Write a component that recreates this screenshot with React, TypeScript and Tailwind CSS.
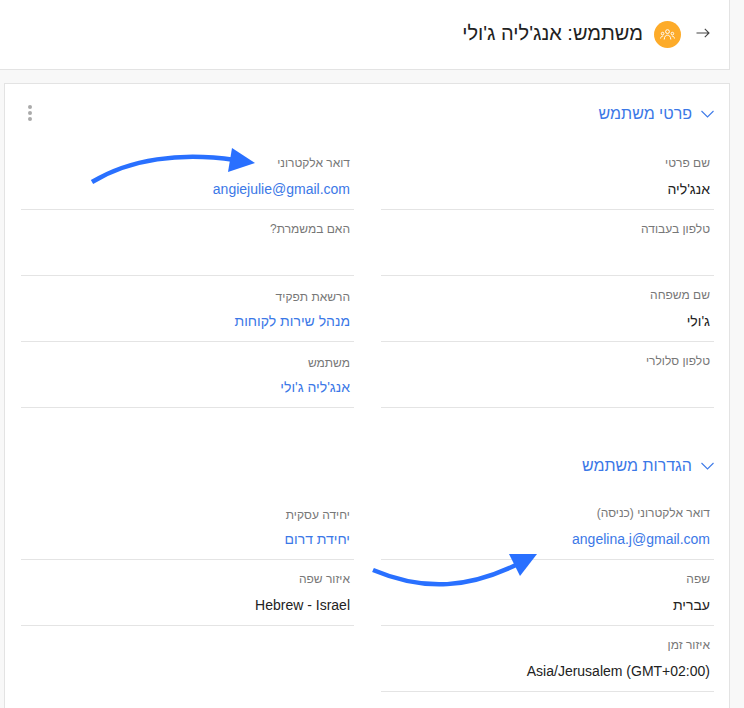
const font = "font-['Liberation_Sans',Arial,sans-serif]";

type Field = { label: string; value?: string; link?: boolean; low?: boolean };

const details: Field[] = [
  { label: "שם פרטי", value: "אנג'ליה" },
  { label: "דואר אלקטרוני", value: "angiejulie@gmail.com", link: true },
  { label: "טלפון בעבודה" },
  { label: "האם במשמרת?" },
  { label: "שם משפחה", value: "ג'ולי" },
  { label: "הרשאת תפקיד", value: "מנהל שירות לקוחות", link: true, low: true },
  { label: "טלפון סלולרי" },
  { label: "משתמש", value: "אנג'ליה ג'ולי", link: true, low: true },
];

const settings: Field[] = [
  { label: "דואר אלקטרוני (כניסה)", value: "angelina.j@gmail.com", link: true },
  { label: "יחידה עסקית", value: "יחידת דרום", link: true, low: true },
  { label: "שפה", value: "עברית" },
  { label: "איזור שפה", value: "Hebrew - Israel" },
  { label: "איזור זמן", value: "Asia/Jerusalem (GMT+02:00)" },
];

function Chevron() {
  return (
    <svg width="13" height="8" viewBox="0 0 13 8" fill="none" stroke="#3f7be8" strokeWidth="1.1">
      <path d="M0.5 1 L6.5 7 L12.5 1" />
    </svg>
  );
}

function Row({ item }: { item: Field }) {
  return (
    <div className={`h-[66px] border-b border-[#e4e4e4] px-1 ${item.low ? "pt-[13px]" : "pt-[11px]"}`}>
      <div className="h-[17px] text-xs leading-[17px] text-[#777]">{item.label}</div>
      <div
        className={`h-5 text-sm leading-5 ${item.low ? "mt-[5px]" : "mt-[7px]"} ${
          item.link ? "text-[#3b78e7]" : "text-[#222]"
        }`}
      >
        {item.value}
      </div>
    </div>
  );
}

function SectionTitle({ title }: { title: string }) {
  return (
    <div className="flex h-5 items-center gap-[9px]">
      <div className="mt-[2px] flex">
        <Chevron />
      </div>
      <span className="mt-[1px] text-base leading-5 text-[#3b78e7]">{title}</span>
    </div>
  );
}

export default function App() {
  return (
    <div dir="rtl" className={`relative h-[708px] overflow-hidden bg-[#f8f8f8] ${font}`}>
      <header className="mr-[14px] flex h-[70px] items-center border-b border-r border-[#e3e3e3] bg-white pb-[3px] pr-[19px]">
        <svg width="14" height="10" viewBox="0 0 14 10" fill="none" stroke="#444" strokeWidth="1.1">
          <path d="M0.5 5 H13 M8.8 0.8 L13 5 L8.8 9.2" />
        </svg>
        <div className="mr-[15px] mt-[3px] flex h-[27px] w-[27px] items-center justify-center rounded-full bg-[#fdab29]">
          <svg width="15" height="12" viewBox="0 0 15 12" fill="none" stroke="#fff" strokeWidth="1">
            <circle cx="7.5" cy="2.6" r="1.9" />
            <circle cx="2.6" cy="4.6" r="1.3" />
            <circle cx="12.4" cy="4.6" r="1.3" />
            <path d="M4.2 10.5 C4.4 7.4 5.7 6.2 7.5 6.2 C9.3 6.2 10.6 7.4 10.8 10.5" />
            <path d="M0.6 9.5 C0.8 7.8 1.6 7.1 3.2 7.1 M14.4 9.5 C14.2 7.8 13.4 7.1 11.8 7.1" />
          </svg>
        </div>
        <h1 className="mr-[11px] text-xl font-normal leading-7 text-[#222]">משתמש: אנג'ליה ג'ולי</h1>
      </header>

      <main className="mr-[14px] ml-1 mt-[13px] h-[640px] border border-[#e3e3e3] bg-white pl-4 pr-[15px] pt-[19px]">
        <div className="relative">
          <SectionTitle title="פרטי משתמש" />
          <div className="absolute left-[7px] top-[2px] flex flex-col gap-[2px]">
            <span className="h-1 w-1 rounded-full bg-[#aaa]" />
            <span className="h-1 w-1 rounded-full bg-[#aaa]" />
            <span className="h-1 w-1 rounded-full bg-[#aaa]" />
          </div>
        </div>
        <div className="mt-[21px] grid grid-cols-[333px_333px] gap-x-[27px]">
          {details.map((item) => (
            <Row key={item.label} item={item} />
          ))}
        </div>

        <div className="mt-[47px]">
          <SectionTitle title="הגדרות משתמש" />
        </div>
        <div className="mt-[19px] grid grid-cols-[333px_333px] gap-x-[27px]">
          {settings.map((item) => (
            <Row key={item.label} item={item} />
          ))}
        </div>
      </main>

      {/* annotation arrows drawn over the page */}
      <svg className="absolute left-0 top-0" width="744" height="708" fill="none">
        <path d="M92 182 C130 159 180 152 235 160" stroke="#2970ff" strokeWidth="4.5" />
        <path d="M232 148 L255 163 L228 172 Z" fill="#2970ff" />
        <path d="M373 570 C425 592 470 588 520 563" stroke="#2970ff" strokeWidth="4.5" />
        <path d="M509 554 L537 554 L520 576 Z" fill="#2970ff" />
      </svg>
    </div>
  );
}
